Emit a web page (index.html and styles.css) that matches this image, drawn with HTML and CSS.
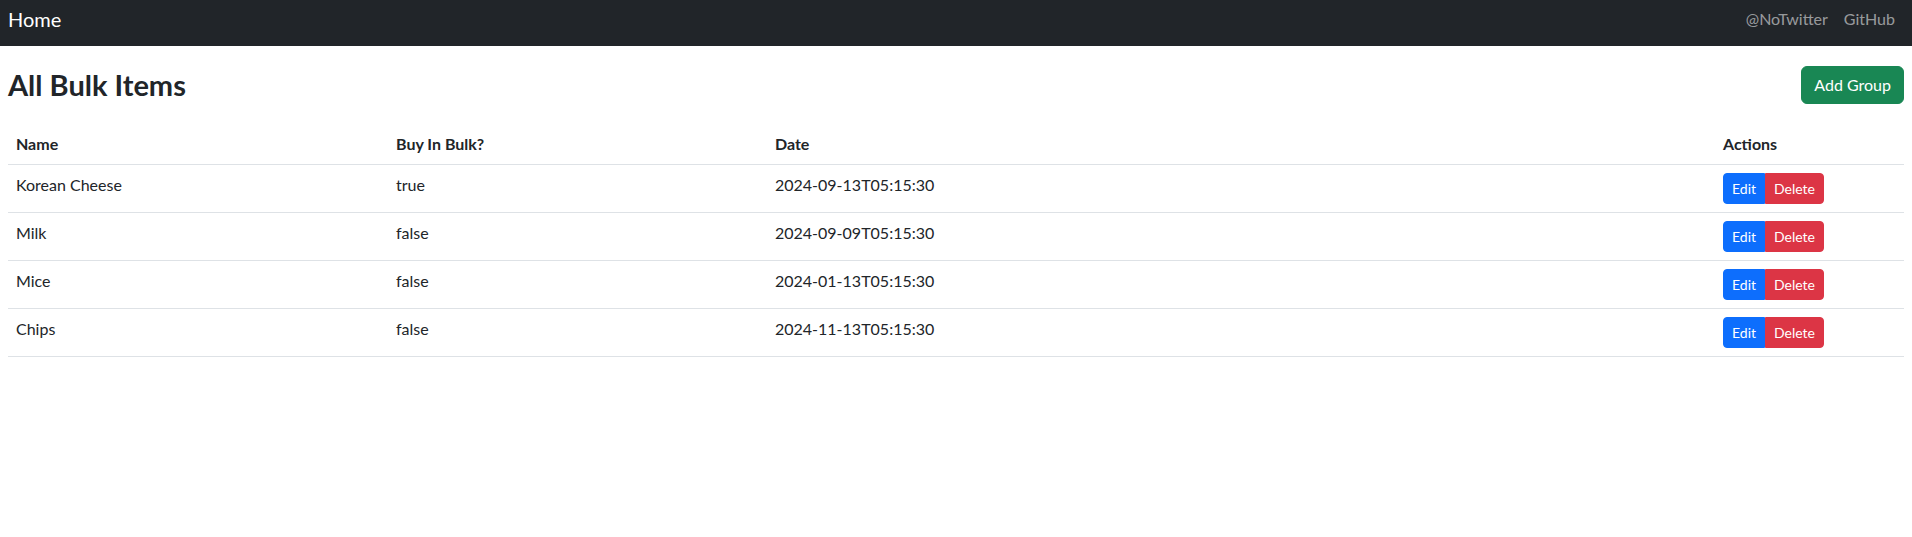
FILE: index.html
```html
<!DOCTYPE html>
<html lang="en">
<head>
<meta charset="utf-8">
<title>All Bulk Items</title>
<link rel="stylesheet" href="styles.css">
</head>
<body>
<nav class="navbar">
  <a class="brand" href="#">Home</a>
  <div class="nav-links">
    <a href="#">@NoTwitter</a>
    <a href="#">GitHub</a>
  </div>
</nav>
<main class="container">
  <div class="page-head">
    <h2>All Bulk Items</h2>
    <button class="btn btn-success">Add Group</button>
  </div>
  <table class="table">
    <thead>
      <tr>
        <th class="c-name">Name</th>
        <th class="c-bulk">Buy In Bulk?</th>
        <th class="c-date">Date</th>
        <th class="c-act">Actions</th>
      </tr>
    </thead>
    <tbody>
      <tr><td>Korean Cheese</td><td>true</td><td>2024-09-13T05:15:30</td><td><div class="btn-group"><button class="btn-sm btn-primary">Edit</button><button class="btn-sm btn-danger">Delete</button></div></td></tr>
      <tr><td>Milk</td><td>false</td><td>2024-09-09T05:15:30</td><td><div class="btn-group"><button class="btn-sm btn-primary">Edit</button><button class="btn-sm btn-danger">Delete</button></div></td></tr>
      <tr><td>Mice</td><td>false</td><td>2024-01-13T05:15:30</td><td><div class="btn-group"><button class="btn-sm btn-primary">Edit</button><button class="btn-sm btn-danger">Delete</button></div></td></tr>
      <tr><td>Chips</td><td>false</td><td>2024-11-13T05:15:30</td><td><div class="btn-group"><button class="btn-sm btn-primary">Edit</button><button class="btn-sm btn-danger">Delete</button></div></td></tr>
    </tbody>
  </table>
</main>
</body>
</html>
```
FILE: styles.css
```css
* { box-sizing: border-box; }
html, body { margin: 0; padding: 0; }
body {
  font-family: "Lato", "Liberation Sans", sans-serif;
  font-size: 16px;
  line-height: 1.5;
  color: #212529;
  background: #fff;
}
a { text-decoration: none; }
.navbar {
  background: #212529;
  height: 46px;
  display: flex;
  justify-content: space-between;
  align-items: center;
  padding: 0 17px 0 8px;
}
.brand {
  color: #fff;
  font-size: 20px;
  line-height: 30px;
  padding-bottom: 8px;
}
.nav-links {
  display: flex;
  gap: 16px;
  padding-bottom: 8px;
}
.nav-links a {
  color: rgba(255, 255, 255, 0.55);
  font-size: 16px;
}
.container {
  padding: 0 8px;
}
.page-head {
  display: flex;
  justify-content: space-between;
  align-items: center;
  margin-top: 20px;
  margin-bottom: 20px;
}
.page-head h2 {
  margin: 0;
  font-size: 29px;
  font-weight: 700;
  line-height: 38px;
}
.btn {
  font-family: inherit;
  font-size: 16px;
  line-height: 24px;
  padding: 6px 12px;
  border: 1px solid transparent;
  border-radius: 6px;
  cursor: pointer;
}
.btn-success { background: #198754; border-color: #198754; color: #fff; }
.table {
  width: 100%;
  border-collapse: collapse;
  table-layout: fixed;
}
.table th, .table td {
  text-align: left;
  padding: 8px;
  vertical-align: top;
  border-bottom: 1px solid #dee2e6;
}
.table th { font-weight: 700; }
.c-name { width: 380px; }
.c-bulk { width: 379px; }
.c-act { width: 189px; }
.btn-group { display: inline-flex; }
.btn-sm {
  font-family: inherit;
  font-size: 14px;
  line-height: 21px;
  padding: 4px 8px;
  border: 1px solid transparent;
  color: #fff;
  cursor: pointer;
}
.btn-primary { background: #0d6efd; border-color: #0d6efd; border-radius: 4px 0 0 4px; }
.btn-danger { background: #dc3545; border-color: #dc3545; border-radius: 0 4px 4px 0; }
```
